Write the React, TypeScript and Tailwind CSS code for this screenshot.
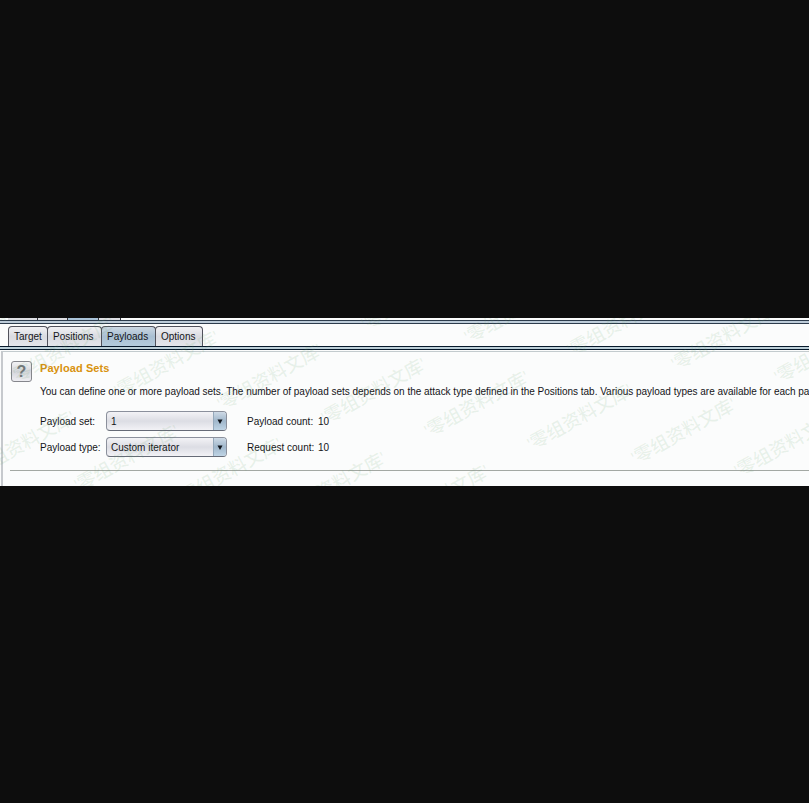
const marks: [number, number][] = [];
for (let row = -1; row <= 2; row++) {
  for (let k = -7; k <= 6; k++) {
    const x = 421 - row * 40 + k * 103.4;
    const y = 428 + row * 94 + k * 13.4 - 318;
    if (x > -100 && x < 805 && y > -4 && y < 212) marks.push([x, y]);
  }
}

function Watermark() {
  return (
    <div className="pointer-events-none absolute inset-0 overflow-hidden" aria-hidden="true">
      {marks.map(([x, y]) => (
        <span
          key={`${x},${y}`}
          className="absolute origin-top-left -rotate-[29deg] whitespace-nowrap font-['Liberation_Sans','Noto_Sans_CJK_SC',sans-serif] text-[18.3px] leading-[20px] font-medium text-[#5f9f66]/[0.12]"
          style={{ left: x, top: y - 4 }}
        >
          '零组资料文库'
        </span>
      ))}
    </div>
  );
}

function Tab({ label, width, active = false }: { label: string; width: string; active?: boolean }) {
  return (
    <div
      className={`${width} -ml-px flex h-[20px] shrink-0 items-center rounded-t-[4px] border border-b-0 border-[#50515b] pl-[5px] whitespace-nowrap ${
        active
          ? "bg-linear-to-b from-[#cbd7e3] via-[#a9bfd2] to-[#b4cbdc]"
          : "bg-linear-to-b from-[#f1f1f4] via-[#dadbe1] to-[#e4e5ea]"
      }`}
    >
      {label}
    </div>
  );
}

function Select({ value }: { value: string }) {
  return (
    <div className="flex h-[20px] w-[121px] overflow-hidden rounded-[4px] border border-[#8b909c] border-b-[#666b77] bg-linear-to-b from-[#f3f3f6] via-[#dcdde4] to-[#f2f2f6]">
      <div className="flex flex-1 items-center pl-[4px]">{value}</div>
      <div className="flex w-[13px] items-center justify-center border-l border-[#95a9bb] bg-linear-to-b from-[#cedae6] via-[#a0b7cb] to-[#bfd4e5]">
        <svg width="6" height="5" viewBox="0 0 6 5" className="-ml-px">
          <path d="M0.5 0.5h5L3 5z" fill="#10151c" />
        </svg>
      </div>
    </div>
  );
}

function Row({ label, value, countLabel }: { label: string; value: string; countLabel: string }) {
  return (
    <div className="flex h-[20px] items-center">
      <div className="w-[66px]">{label}</div>
      <Select value={value} />
      <div className="ml-[20px] w-[71px]">{countLabel}</div>
      <div>10</div>
    </div>
  );
}

export default function App() {
  return (
    <div className="h-[803px] w-[809px] overflow-hidden bg-[#0d0d0d] pt-[318px] font-['Liberation_Sans',Arial,sans-serif] text-[10px] leading-[13px] text-[#141418]">
      <div className="relative flex h-[168px] flex-col overflow-hidden bg-[#fbfcfc]">
        <div className="flex h-[2px] shrink-0 pl-[8px]">
          <div className="w-[30px] border-r border-[#34363e] bg-[#dddee3]" />
          <div className="w-[30px] border-r border-[#34363e] bg-[#dddee3]" />
          <div className="w-[31px] border-r border-[#34363e] bg-[#a9c2d8]" />
          <div className="w-[22px] border-r border-[#34363e] bg-[#dddee3]" />
        </div>
        <div className="h-[4px] shrink-0 border-y border-[#2d3c4c] bg-[#bccbd8]" />
        <div className="flex h-[22px] shrink-0 items-end pl-[9px]">
          <Tab label="Target" width="w-[40px]" />
          <Tab label="Positions" width="w-[55px]" />
          <Tab label="Payloads" width="w-[55px]" active />
          <Tab label="Options" width="w-[48px]" />
        </div>
        <div className="h-[4px] shrink-0 border-y border-[#06182a] bg-[#bccfd8]" />
        <div className="ml-px flex-1 pt-px">
          <div className="h-full border-t border-l-2 border-t-[#c3cbce] border-l-[#c6c9cd]">
            <div className="flex pt-[9px] pl-[8px]">
              <div className="flex size-[21px] shrink-0 items-center justify-center rounded-[3px] border border-[#85868c] bg-linear-to-b from-[#f3f3f5] via-[#d5d6dc] to-[#eeeef2] text-[16px] font-bold text-[#74767c]">
                ?
              </div>
              <div className="ml-[8px] pt-px whitespace-nowrap">
                <div className="text-[11px] font-bold tracking-[0.08px] text-[#d8920e]">Payload Sets</div>
                <div className="mt-[10px] tracking-[-0.015px]">
                  You can define one or more payload sets. The number of payload sets depends on the attack type defined in the Positions tab. Various payload types are available for each payload set
                </div>
                <div className="mt-[13px] flex flex-col gap-[6px]">
                  <Row label="Payload set:" value="1" countLabel="Payload count:" />
                  <Row label="Payload type:" value="Custom iterator" countLabel="Request count:" />
                </div>
              </div>
            </div>
            <div className="mt-[13px] ml-[7px] h-px bg-[#a3a8a3]" />
          </div>
        </div>
        <Watermark />
      </div>
    </div>
  );
}
